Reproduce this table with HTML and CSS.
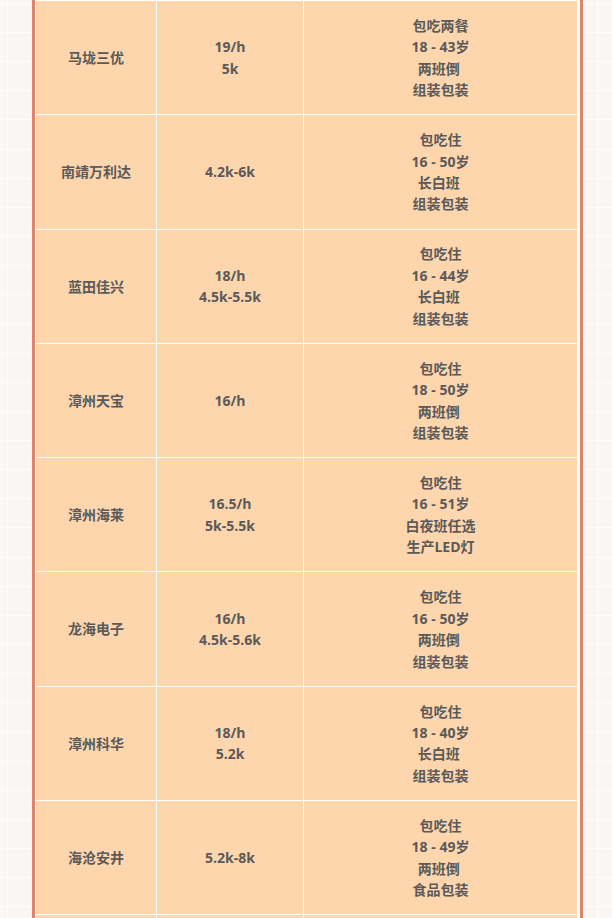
FILE: index.html
```html
<!DOCTYPE html>
<html lang="zh-CN">
<head>
<meta charset="utf-8">
<title>岗位列表</title>
<link rel="stylesheet" href="styles.css">
</head>
<body>
<div class="frame">
  <div class="table">
    <div class="cell name">马垅三优</div>
    <div class="cell pay"><p>19/h</p><p>5k</p></div>
    <div class="cell info"><p>包吃两餐</p><p>18 - 43岁</p><p>两班倒&nbsp;</p><p>组装包装</p></div>

    <div class="cell name">南靖万利达</div>
    <div class="cell pay"><p>4.2k-6k</p></div>
    <div class="cell info"><p>包吃住</p><p>16 - 50岁</p><p>长白班&nbsp;</p><p>组装包装</p></div>

    <div class="cell name">蓝田佳兴</div>
    <div class="cell pay"><p>18/h</p><p>4.5k-5.5k</p></div>
    <div class="cell info"><p>包吃住</p><p>16 - 44岁</p><p>长白班&nbsp;</p><p>组装包装</p></div>

    <div class="cell name">漳州天宝</div>
    <div class="cell pay"><p>16/h</p></div>
    <div class="cell info"><p>包吃住</p><p>18 - 50岁</p><p>两班倒&nbsp;</p><p>组装包装</p></div>

    <div class="cell name">漳州海莱</div>
    <div class="cell pay"><p>16.5/h</p><p>5k-5.5k</p></div>
    <div class="cell info"><p>包吃住</p><p>16 - 51岁</p><p>白夜班任选</p><p>生产LED灯</p></div>

    <div class="cell name">龙海电子</div>
    <div class="cell pay"><p>16/h</p><p>4.5k-5.6k</p></div>
    <div class="cell info"><p>包吃住</p><p>16 - 50岁</p><p>两班倒&nbsp;</p><p>组装包装</p></div>

    <div class="cell name">漳州科华</div>
    <div class="cell pay"><p>18/h</p><p>5.2k</p></div>
    <div class="cell info"><p>包吃住</p><p>18 - 40岁</p><p>长白班&nbsp;</p><p>组装包装</p></div>

    <div class="cell name">海沧安井</div>
    <div class="cell pay"><p>5.2k-8k</p></div>
    <div class="cell info"><p>包吃住</p><p>18 - 49岁</p><p>两班倒&nbsp;</p><p>食品包装</p></div>

    <div class="cell name"></div>
    <div class="cell pay"></div>
    <div class="cell info"></div>
  </div>
</div>
</body>
</html>
```

FILE: styles.css
```css
html, body {
  margin: 0;
  padding: 0;
}

body {
  width: 612px;
  height: 918px;
  overflow: hidden;
  background-color: #faf6f4;
  background-image:
    linear-gradient(to right,
      transparent 0 2px, #fefdfc 2px 3px,
      transparent 3px 7px, #fefdfc 7px 8px,
      transparent 8px 597.5px, #fefdfc 597.5px 598.5px,
      transparent 598.5px),
    repeating-linear-gradient(to bottom,
      transparent 0 2.8px, #fefdfc 2.8px 3.8px,
      transparent 3.8px 29.15px);
  font-family: "Open Sans", "Noto Sans CJK SC", sans-serif;
  color: #5a5a5a;
}

.frame {
  margin-left: 32px;
  width: 543px;
  padding: 0 1px;
  border-left: 3px solid #dd846a;
  border-right: 3px solid #dd846a;
  min-height: 918px;
}

.table {
  display: grid;
  grid-template-columns: 120px 146px 273px;
  grid-auto-rows: 113.3px;
  gap: 1px;
  padding-top: 1px;
  background: #ffffff;
}

.cell {
  background: #fed6ae;
  display: flex;
  flex-direction: column;
  align-items: center;
  justify-content: center;
  font-size: 14px;
  font-weight: 700;
  text-align: center;
  line-height: 21.4px;
}

.cell p {
  margin: 0;
  white-space: pre;
}
```
